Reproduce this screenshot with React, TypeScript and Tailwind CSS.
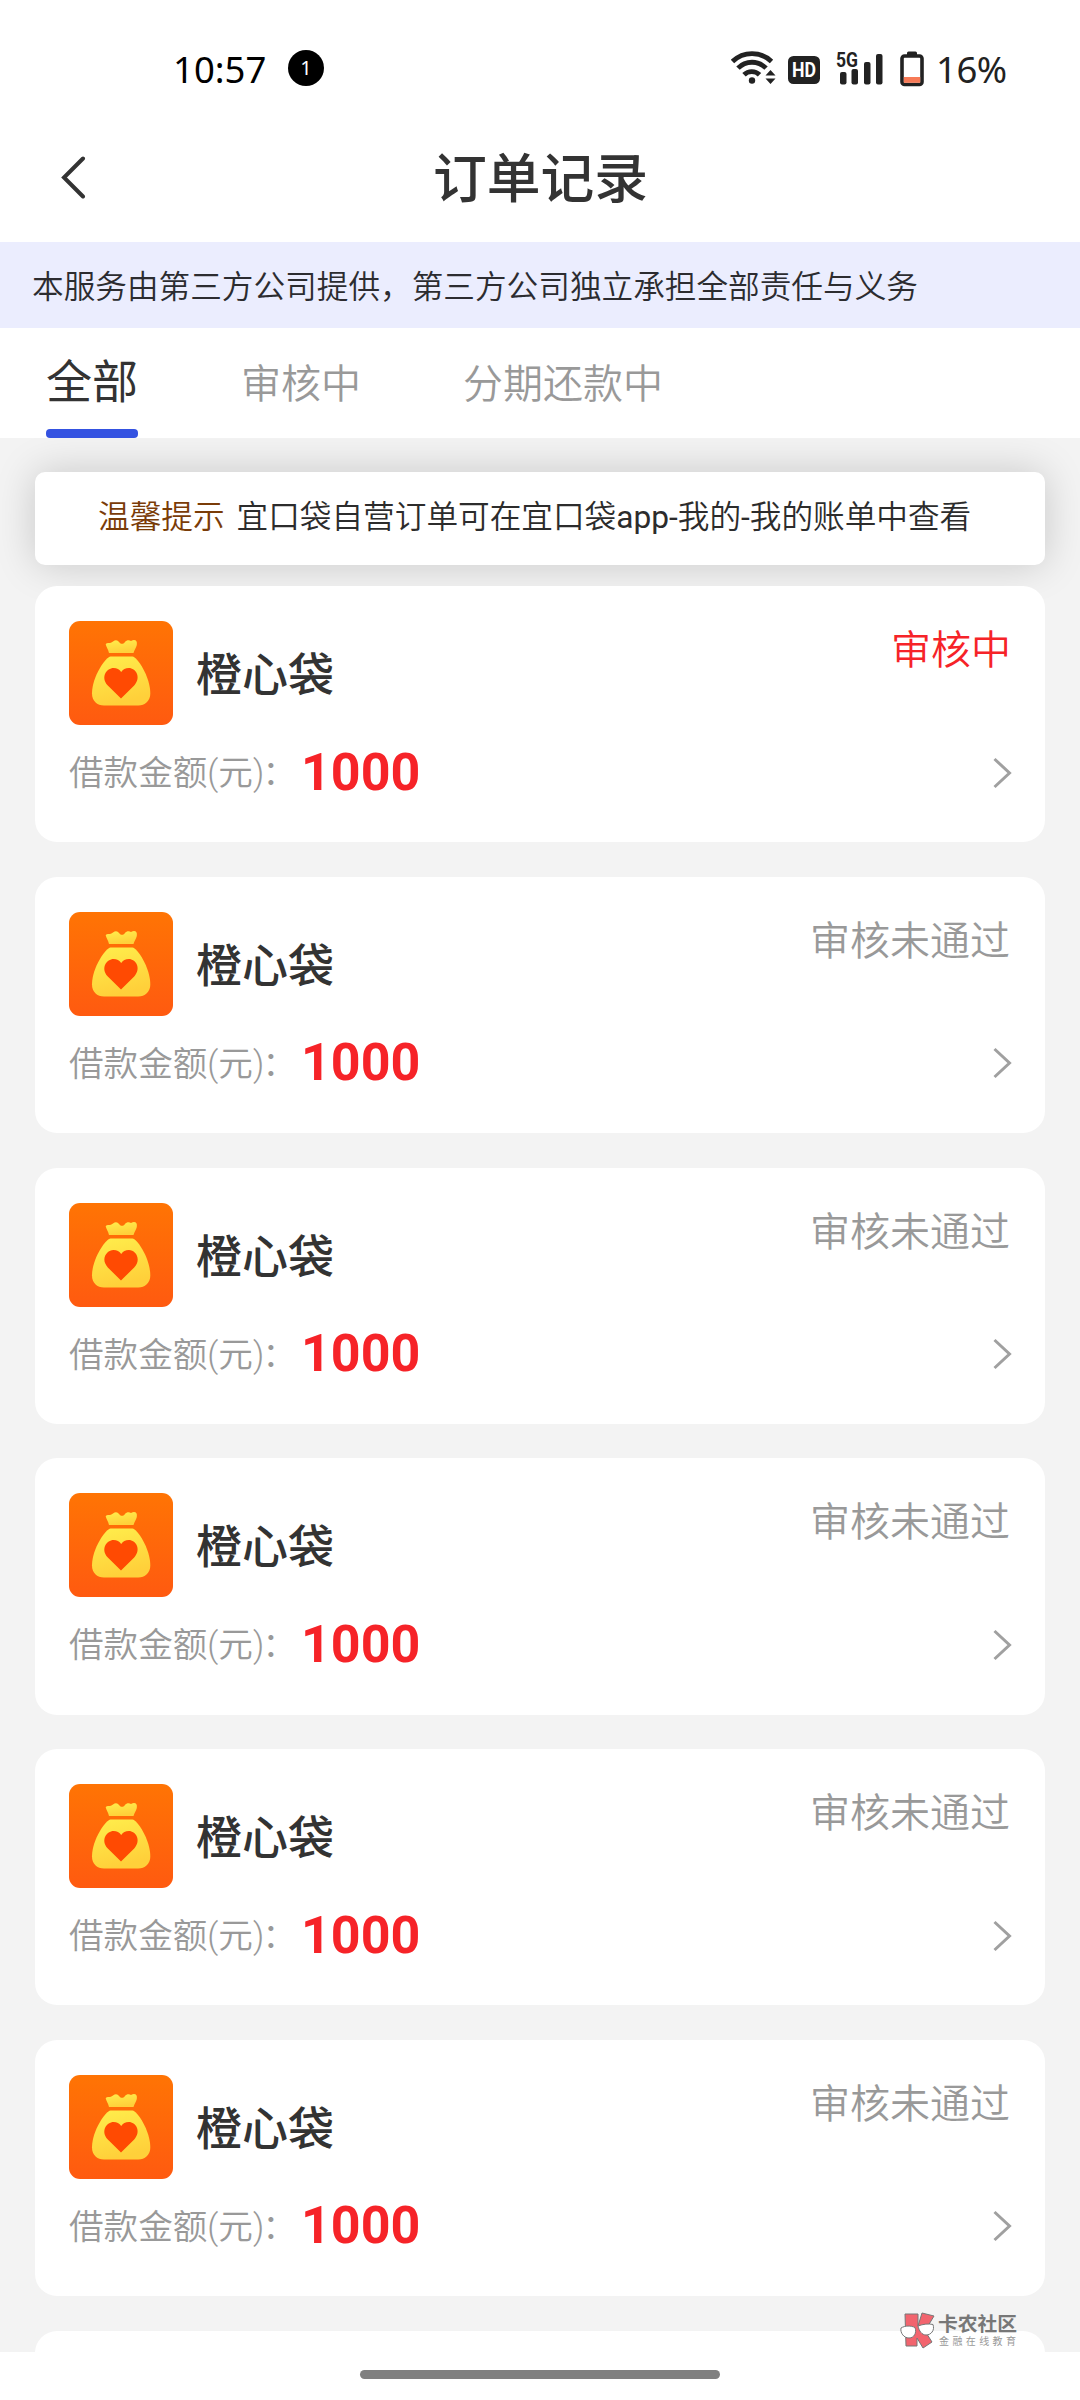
type Order = { status: string; active?: boolean };

const orders: Order[] = [
  { status: '审核中', active: true },
  { status: '审核未通过' },
  { status: '审核未通过' },
  { status: '审核未通过' },
  { status: '审核未通过' },
  { status: '审核未通过' },
];

function WifiIcon() {
  return (
    <svg width="45" height="34" viewBox="0 0 45 34" fill="none" stroke="#222" strokeWidth="4.8">
      <path d="M1.500 11.500a28 28 0 0 1 39 0" />
      <path d="M7 18.200a19.500 19.500 0 0 1 28 0" />
      <path d="M13 24.800a11 11 0 0 1 15.500 0" />
      <circle cx="21" cy="30.500" r="3.200" fill="#222" stroke="none" />
      <path d="M34.500 25.500l5-5.500 5 5.500zM34.500 28.500l5 5.500 5-5.500z" fill="#222" stroke="none" />
    </svg>
  );
}

function SignalIcon() {
  return (
    <svg width="48" height="36" viewBox="0 0 48 36" fill="#222">
      <text x="0" y="17" fontSize="19.5" fontWeight="700" fontFamily="Roboto, sans-serif" textLength="22" lengthAdjust="spacingAndGlyphs">
        5G
      </text>
      <rect x="4" y="22" width="6.500" height="12.500" rx="2" />
      <rect x="15.500" y="19" width="6.500" height="15.500" rx="2" />
      <rect x="28" y="12" width="6.500" height="22.500" rx="2" />
      <rect x="40" y="4" width="6.500" height="30.500" rx="2" />
    </svg>
  );
}

function BatteryIcon() {
  return (
    <svg width="24" height="36" viewBox="0 0 24 36">
      <rect x="7" y="0.5" width="10" height="5" rx="1.5" fill="#222" />
      <rect x="2" y="5" width="20" height="28.500" rx="2.500" fill="#fff" stroke="#222" strokeWidth="3.600" />
      <path d="M3.800 26h16.400v5.800H3.800z" fill="#f77a57" />
    </svg>
  );
}

function BagIcon() {
  return (
    <svg className="size-[104px] shrink-0" viewBox="0 0 104 104">
      <defs>
        <linearGradient id="tile" x1="0" y1="0" x2="0" y2="1">
          <stop offset="0" stopColor="#ff7404" />
          <stop offset="1" stopColor="#ff5a10" />
        </linearGradient>
        <linearGradient id="bag" x1="0" y1="0" x2="0.3" y2="1">
          <stop offset="0" stopColor="#ffee4c" />
          <stop offset="1" stopColor="#ffd03a" />
        </linearGradient>
      </defs>
      <rect width="104" height="104" rx="11" fill="url(#tile)" />
      <path
        d="M40 32c-.8-3.600-2.500-5.500-3.300-8.800 1.500-2 4.300-.3 7.300-2.700 2.500-2 4.500-1.600 6.300.7 1.600 2.200 3.800 2.200 5.500 0 1.800-2.400 4.500-2.200 6.200-1.300 4-2 6.600-.3 5.800 4.100-.6 3-2.600 5-3.300 8z"
        fill="url(#bag)"
      />
      <path
        d="M41.500 35.500h22c4.500 0 17.800 20 17.800 37 0 7.500-5.500 12-12 12H35c-7 0-12-4.500-12-12 0-17 14-37 18.500-37z"
        fill="url(#bag)"
      />
      <path
        d="M52 77.500L38.800 64.500C31 56 38 47 44.500 47c3.400 0 6 1.500 7.700 4 1.700-2.500 4.300-4 7.700-4 6.500 0 13 9 5.300 17.500z"
        fill="#ff4a02"
      />
    </svg>
  );
}

function StatusBar() {
  return (
    <div className="flex h-[118px] items-start pt-[50px] pr-[73px] pl-[173px] text-black">
      <span className="w-[95px] font-['Noto_Sans',sans-serif] text-[36.500px] leading-[39px] whitespace-nowrap">10:57</span>
      <span className="ml-5 flex size-9 items-center justify-center rounded-full bg-black font-['Noto_Sans',sans-serif] text-[20px] text-white">
        1
      </span>
      <div className="ml-auto flex h-9 items-start text-[#222]">
        <WifiIcon />
        <svg className="mt-1.5 ml-3" width="32" height="28" viewBox="0 0 32 28">
          <rect width="32" height="28" rx="5.500" fill="#222" />
          <text x="4" y="21" fill="#fff" fontSize="20" fontWeight="700" fontFamily="Roboto, sans-serif" textLength="24" lengthAdjust="spacingAndGlyphs">
            HD
          </text>
        </svg>
        <span className="ml-4">
          <SignalIcon />
        </span>
        <span className="mt-px ml-4">
          <BatteryIcon />
        </span>
        <span className="ml-3 w-[71px] font-['Noto_Sans',sans-serif] text-[36.500px] leading-[39px] tracking-[-0.5px] whitespace-nowrap">
          16%
        </span>
      </div>
    </div>
  );
}

function OrderCard({ status, active }: Order) {
  return (
    <article className="h-[256.3px] shrink-0 rounded-[22px] bg-white px-[34px] pt-[35px]">
      <div className="flex h-[104px]">
        <BagIcon />
        <h2 className="mt-[17px] ml-[23px] text-[46px] leading-[66px] font-medium text-[#333]">橙心袋</h2>
        <span
          className={
            active
              ? 'mt-[-2px] ml-auto text-[40px] leading-[56px] font-[350] text-[#f62328]'
              : 'mt-[-2px] mr-px ml-auto text-[40px] leading-[56px] font-[350] text-[#999]'
          }
        >
          {status}
        </span>
      </div>
      <div className="mt-[17.500px] flex h-[60px] items-center">
        <span className="w-[232px] pt-[3px] font-['Roboto','Noto_Sans_CJK_SC',sans-serif] text-[34.6px] font-[350] whitespace-nowrap text-[#999]">
          借款金额(元)<span className="ml-[-2px]">：</span>
        </span>
        <span className="font-['Roboto',sans-serif] text-[52px] font-bold text-[#f62328]">1000</span>
        <svg className="mr-[-1px] ml-auto" width="20" height="32" viewBox="0 0 20 32" fill="none" stroke="#a0a0a0" strokeWidth="3">
          <path d="M2.500 2l15 14-15 14" />
        </svg>
      </div>
    </article>
  );
}

function Watermark() {
  return (
    <div className="absolute top-[2311px] left-[900px] flex">
      <svg width="36" height="38" viewBox="0 0 36 38" stroke="#777" strokeWidth="1">
        <path d="M5 3h13v12l4-13 12 3-9 15 7 11-9 6-6-10v8H6z" fill="#f2646e" />
        <path d="M1 17c4-2.500 10-2.500 14-.5 2 5.500-1 10.500-6 10.500S0 22 1 17zM18 15c5-2 11-2.500 15-1.500 2 6-2 10.500-7 10.500-4 0-7-4-8-9z" fill="#fff" />
      </svg>
      <div className="ml-0.5 whitespace-nowrap">
        <div className="text-[19.800px] leading-[24px] font-bold text-[#777]">卡农社区</div>
        <div className="ml-px text-[10px] leading-[12px] tracking-[3.400px] text-[#999]">金融在线教育</div>
      </div>
    </div>
  );
}

export default function App() {
  return (
    <div className="relative flex h-[2400px] w-[1080px] flex-col overflow-hidden bg-white font-['Noto_Sans_CJK_SC',sans-serif]">
      <StatusBar />
      <header className="flex h-[124px] items-center pb-1.5 pl-[57px]">
        <svg width="30" height="44" viewBox="0 0 30 44" fill="none" stroke="#333" strokeWidth="4" strokeLinecap="round">
          <path d="M26 3.500L7 22.500l19 19" />
        </svg>
        <h1 className="mt-[-4px] mr-[86px] flex-1 text-center text-[53.800px] leading-[70px] font-medium text-[#333]">订单记录</h1>
      </header>
      <p className="h-[86px] bg-[#ebedfe] pl-8 text-[31.650px] leading-[85px] font-[350] whitespace-nowrap text-[#2c2c30]">
        本服务由第三方公司提供，第三方公司独立承担全部责任与义务
      </p>
      <nav className="flex h-[110px] text-[40px] font-[350] text-[#999]">
        <div className="ml-[46px] flex w-[92px] flex-col justify-between text-[46px] leading-[101px] font-normal text-[#333]">
          <span className="h-[101px]">全部</span>
          <span className="h-[9px] rounded-[4px] bg-[#3452e1]" />
        </div>
        <span className="ml-[103px] leading-[107px]">审核中</span>
        <span className="ml-[102px] leading-[107px]">分期还款中</span>
      </nav>
      <main className="flex h-[1914px] flex-col overflow-hidden bg-[#f3f3f3] px-[35px] pt-[34px]">
        <p className="flex h-[93px] shrink-0 items-center rounded-[10px] bg-white pb-px pl-[63px] font-['Roboto','Noto_Sans_CJK_SC',sans-serif] text-[31.650px] font-[350] whitespace-nowrap text-[#2c2c2c] shadow-[0_0_40px_rgba(0,0,0,0.18)]">
          <span className="mr-3 text-[#7a3c08]">温馨提示</span>
          宜口袋自营订单可在宜口袋<span className="font-normal">app-</span>我的
          <span className="font-normal">-</span>我的账单中查看
        </p>
        <div className="relative mt-[21px] flex flex-col gap-[34.500px]">
          {orders.map((order, i) => (
            <OrderCard key={i} {...order} />
          ))}
          <div className="h-[256.3px] shrink-0 rounded-[22px] bg-white" />
        </div>
      </main>
      <footer className="flex h-12 justify-center pt-[18px]">
        <span className="h-[9px] w-[360px] rounded-full bg-[#808080]" />
      </footer>
      <Watermark />
    </div>
  );
}
